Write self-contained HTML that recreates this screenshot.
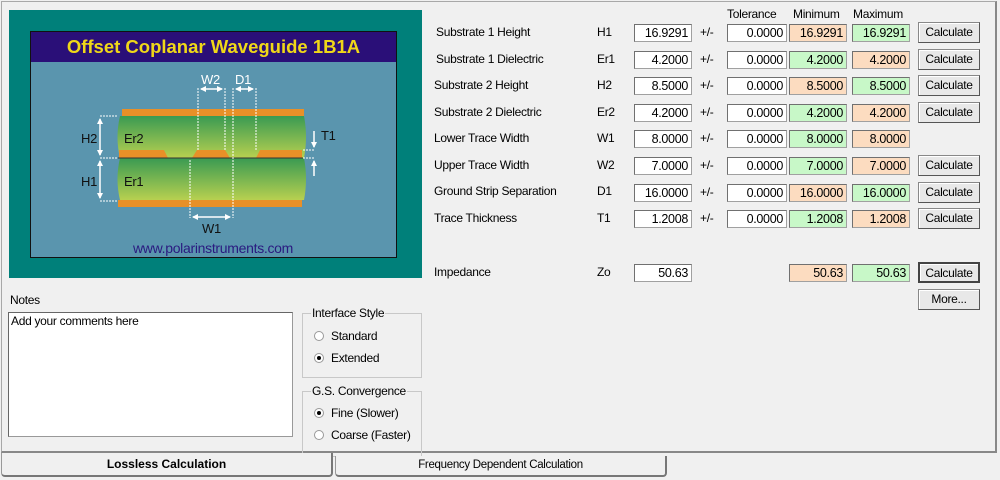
<!DOCTYPE html>
<html><head><style>
body{margin:0;width:1000px;height:480px;background:#f0f0f0;position:relative;overflow:hidden;font-family:"Liberation Sans",sans-serif;font-size:12px;color:#000;letter-spacing:-0.3px}
.a{position:absolute;white-space:nowrap}
.box{position:absolute;height:18px;border:1px solid #a0a0a0;border-top-color:#707070;border-left-color:#707070;background:#fff;text-align:right;line-height:17px;padding-right:3px;box-sizing:border-box;font-size:12.5px;letter-spacing:-0.3px}
.o{background:#fcdcc0}.g{background:#c8f8c8}
.btn{position:absolute;width:62px;height:21px;border:1px solid #888;border-right-color:#555;border-bottom-color:#555;background:#e8e8e8;text-align:center;line-height:19px;box-sizing:border-box;box-shadow:inset 1px 1px 0 #fff}
.grp{position:absolute;border:1px solid #c8c8c8;box-sizing:border-box}
.leg{position:absolute;background:#f0f0f0;padding:0 1px;top:-8px;left:8px}
.rad{position:absolute;width:10px;height:10px;border-radius:50%;border:1px solid #999;background:#fff;box-sizing:border-box}
.rad.on::after{content:"";position:absolute;left:2px;top:2px;width:4px;height:4px;border-radius:50%;background:#000}
.pm{position:absolute;top:0}
</style></head><body>
<div class="a" style="left:1px;top:1px;width:996px;height:452px;border:1px solid #a8a8a8;border-right:2px solid #888;border-bottom:2px solid #888;box-sizing:border-box"></div>
<div class="a" style="left:9px;top:10px;width:413px;height:268px;background:#00807a"></div>
<div class="a" style="left:30px;top:31px;width:367px;height:227px;background:#5a95ae;border:1px solid #111;box-sizing:border-box"></div>
<div class="a" style="left:31px;top:32px;width:365px;height:30px;background:#2a0f78;color:#f0d818;font-weight:bold;font-size:18.5px;text-align:center;line-height:30px;letter-spacing:0">Offset Coplanar Waveguide 1B1A</div>
<svg class="a" style="left:30px;top:62px" width="367" height="196" viewBox="30 62 367 196">
<defs><linearGradient id="gr" x1="0" y1="0" x2="0" y2="1"><stop offset="0" stop-color="#3a9a52"/><stop offset="1" stop-color="#b8d050"/></linearGradient>
<marker id="ar" viewBox="0 0 6 6" refX="5" refY="3" markerWidth="4" markerHeight="4" orient="auto-start-reverse"><path d="M0 0 L6 3 L0 6Z" fill="#fff"/></marker></defs>
<rect x="122" y="109" width="182" height="7" fill="#e89028"/>
<path d="M120 116 H304 Q308 137 304 158 H120 Q115 137 120 116Z" fill="url(#gr)"/>
<path d="M120 158 H304 Q308 179 304 200 H120 Q115 179 120 158Z" fill="url(#gr)"/>
<rect x="118" y="200" width="184" height="7" fill="#e89028"/>
<path d="M119 150 H164 L168 158 H119Z" fill="#e89028"/>
<path d="M192 158 L197 150 H225 L230 158Z" fill="#e89028"/>
<path d="M256 158 L260 150 H302 V158Z" fill="#e89028"/>
<line x1="118" y1="158" x2="304" y2="158" stroke="#333" stroke-width="1"/>
<g stroke="#fff" stroke-width="1" stroke-dasharray="2,1" fill="none">
<line x1="198" y1="88" x2="198" y2="150"/><line x1="225" y1="88" x2="225" y2="150"/>
<line x1="233" y1="88" x2="233" y2="160"/><line x1="256" y1="88" x2="256" y2="150"/>
<line x1="190" y1="160" x2="190" y2="218"/><line x1="233" y1="160" x2="233" y2="218"/>
<line x1="100" y1="116" x2="117" y2="116"/><line x1="100" y1="158" x2="117" y2="158"/><line x1="100" y1="201" x2="117" y2="201"/>
<line x1="303" y1="150" x2="315" y2="150"/><line x1="303" y1="158" x2="315" y2="158"/>
</g>
<g stroke="#fff" stroke-width="1.5" fill="none" marker-end="url(#ar)" marker-start="url(#ar)">
<line x1="201" y1="89" x2="222" y2="89"/><line x1="236" y1="89" x2="253" y2="89"/>
<line x1="193" y1="217" x2="230" y2="217"/>
<line x1="100" y1="119" x2="100" y2="155"/><line x1="100" y1="161" x2="100" y2="198"/>
</g>
<g stroke="#fff" stroke-width="1.5" fill="none" marker-end="url(#ar)">
<line x1="314" y1="131" x2="314" y2="147"/><line x1="314" y1="176" x2="314" y2="161"/>
</g>
<g font-family="Liberation Sans" font-size="13" fill="#111">
<text x="201" y="84" fill="#fff">W2</text><text x="235" y="84" fill="#fff">D1</text>
<text x="202" y="233">W1</text><text x="81" y="143">H2</text><text x="81" y="186">H1</text>
<text x="124" y="143">Er2</text><text x="124" y="186">Er1</text><text x="321" y="140">T1</text>
<text x="213" y="253" text-anchor="middle" fill="#2a1a80" font-size="14">www.polarinstruments.com</text>
</g>
</svg>
<div class="a" style="left:727px;top:7px">Tolerance</div>
<div class="a" style="left:793px;top:7px">Minimum</div>
<div class="a" style="left:853px;top:7px">Maximum</div>

<div class="a" style="left:436px;top:25px">Substrate 1 Height</div><div class="a" style="left:597px;top:25px">H1</div>
<div class="a" style="left:436px;top:52px">Substrate 1 Dielectric</div><div class="a" style="left:597px;top:52px">Er1</div>
<div class="a" style="left:434px;top:78px">Substrate 2 Height</div><div class="a" style="left:597px;top:78px">H2</div>
<div class="a" style="left:434px;top:105px">Substrate 2 Dielectric</div><div class="a" style="left:597px;top:105px">Er2</div>
<div class="a" style="left:434px;top:131px">Lower Trace Width</div><div class="a" style="left:597px;top:131px">W1</div>
<div class="a" style="left:434px;top:158px">Upper Trace Width</div><div class="a" style="left:597px;top:158px">W2</div>
<div class="a" style="left:434px;top:184px">Ground Strip Separation</div><div class="a" style="left:597px;top:184px">D1</div>
<div class="a" style="left:434px;top:211px">Trace Thickness</div><div class="a" style="left:597px;top:211px">T1</div>
<div class="a" style="left:434px;top:265px">Impedance</div><div class="a" style="left:597px;top:265px">Zo</div>

<div class="box" style="left:634px;top:24px;width:58px">16.9291</div><div class="a" style="left:700px;top:25px">+/-</div><div class="box" style="left:727px;top:24px;width:60px">0.0000</div><div class="box o" style="left:789px;top:24px;width:58px">16.9291</div><div class="box g" style="left:852px;top:24px;width:58px">16.9291</div><div class="btn" style="left:918px;top:22px">Calculate</div>
<div class="box" style="left:634px;top:51px;width:58px">4.2000</div><div class="a" style="left:700px;top:52px">+/-</div><div class="box" style="left:727px;top:51px;width:60px">0.0000</div><div class="box g" style="left:789px;top:51px;width:58px">4.2000</div><div class="box o" style="left:852px;top:51px;width:58px">4.2000</div><div class="btn" style="left:918px;top:49px">Calculate</div>
<div class="box" style="left:634px;top:77px;width:58px">8.5000</div><div class="a" style="left:700px;top:78px">+/-</div><div class="box" style="left:727px;top:77px;width:60px">0.0000</div><div class="box o" style="left:789px;top:77px;width:58px">8.5000</div><div class="box g" style="left:852px;top:77px;width:58px">8.5000</div><div class="btn" style="left:918px;top:75px">Calculate</div>
<div class="box" style="left:634px;top:104px;width:58px">4.2000</div><div class="a" style="left:700px;top:105px">+/-</div><div class="box" style="left:727px;top:104px;width:60px">0.0000</div><div class="box g" style="left:789px;top:104px;width:58px">4.2000</div><div class="box o" style="left:852px;top:104px;width:58px">4.2000</div><div class="btn" style="left:918px;top:102px">Calculate</div>
<div class="box" style="left:634px;top:130px;width:58px">8.0000</div><div class="a" style="left:700px;top:131px">+/-</div><div class="box" style="left:727px;top:130px;width:60px">0.0000</div><div class="box g" style="left:789px;top:130px;width:58px">8.0000</div><div class="box o" style="left:852px;top:130px;width:58px">8.0000</div>
<div class="box" style="left:634px;top:157px;width:58px">7.0000</div><div class="a" style="left:700px;top:158px">+/-</div><div class="box" style="left:727px;top:157px;width:60px">0.0000</div><div class="box g" style="left:789px;top:157px;width:58px">7.0000</div><div class="box o" style="left:852px;top:157px;width:58px">7.0000</div><div class="btn" style="left:918px;top:155px">Calculate</div>
<div class="box" style="left:634px;top:184px;width:58px">16.0000</div><div class="a" style="left:700px;top:185px">+/-</div><div class="box" style="left:727px;top:184px;width:60px">0.0000</div><div class="box o" style="left:789px;top:184px;width:58px">16.0000</div><div class="box g" style="left:852px;top:184px;width:58px">16.0000</div><div class="btn" style="left:918px;top:182px">Calculate</div>
<div class="box" style="left:634px;top:210px;width:58px">1.2008</div><div class="a" style="left:700px;top:211px">+/-</div><div class="box" style="left:727px;top:210px;width:60px">0.0000</div><div class="box g" style="left:789px;top:210px;width:58px">1.2008</div><div class="box o" style="left:852px;top:210px;width:58px">1.2008</div><div class="btn" style="left:918px;top:208px">Calculate</div>
<div class="box" style="left:634px;top:264px;width:58px">50.63</div><div class="box o" style="left:789px;top:264px;width:58px">50.63</div><div class="box g" style="left:852px;top:264px;width:58px">50.63</div><div class="btn" style="left:918px;top:262px;border:2px solid #444">Calculate</div>
<div class="btn" style="left:918px;top:289px">More...</div>

<div class="a" style="left:10px;top:293px">Notes</div>
<div class="a" style="left:8px;top:312px;width:285px;height:125px;background:#fff;border:1px solid #999;border-top-color:#666;border-left-color:#666;box-sizing:border-box;padding:1px 2px">Add your comments here</div>

<div class="grp" style="left:302px;top:313px;width:120px;height:65px"><span class="leg">Interface Style</span></div>
<div class="rad" style="left:314px;top:331px"></div><div class="a" style="left:331px;top:329px">Standard</div>
<div class="rad on" style="left:314px;top:353px"></div><div class="a" style="left:331px;top:351px">Extended</div>
<div class="grp" style="left:302px;top:391px;width:120px;height:66px"><span class="leg">G.S. Convergence</span></div>
<div class="rad on" style="left:314px;top:408px"></div><div class="a" style="left:331px;top:406px">Fine (Slower)</div>
<div class="rad" style="left:314px;top:430px"></div><div class="a" style="left:331px;top:428px">Coarse (Faster)</div>

<div class="a" style="left:1px;top:453px;width:332px;height:24px;background:#f0f0f0;border:1px solid #999;border-top:none;border-bottom:2px solid #777;border-right:2px solid #777;border-radius:0 0 4px 4px;box-sizing:border-box;text-align:center;font-weight:bold;line-height:22px;letter-spacing:0">Lossless Calculation</div>
<div class="a" style="left:335px;top:456px;width:332px;height:21px;background:#f0f0f0;border:1px solid #999;border-top:none;border-bottom:2px solid #777;border-right:2px solid #777;border-radius:0 0 4px 4px;box-sizing:border-box;text-align:center;font-size:11.5px;line-height:19px">Frequency Dependent Calculation</div>
</body></html>
